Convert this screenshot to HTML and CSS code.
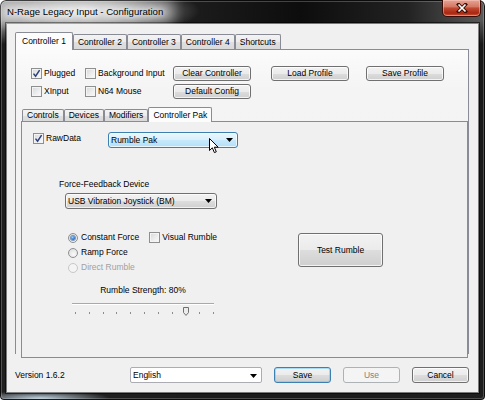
FILE: index.html
```html
<!DOCTYPE html>
<html>
<head>
<meta charset="utf-8">
<title>N-Rage Legacy Input - Configuration</title>
<link rel="stylesheet" href="styles.css">
</head>
<body>
<div class="window">
  <div class="titlebar">
    <div class="title">N-Rage Legacy Input - Configuration</div>
    <div class="close-btn">
      <svg width="12" height="10" viewBox="0 0 12 10"><path d="M2.5 1.5l7 7M9.5 1.5l-7 7" stroke="#3a0d05" stroke-width="3.4" stroke-linecap="square"/><path d="M2.5 1.5l7 7M9.5 1.5l-7 7" stroke="#ffffff" stroke-width="1.7"/></svg>
    </div>
  </div>
  <div class="client">
    <div class="tabstrip outer-tabs">
      <div class="tab selected">Controller 1</div>
      <div class="tab">Controller 2</div>
      <div class="tab">Controller 3</div>
      <div class="tab">Controller 4</div>
      <div class="tab">Shortcuts</div>
    </div>
    <div class="page outer-page">
      <div class="controller-grid">
        <label class="check"><span class="box"><svg width="9" height="9" viewBox="0 0 9 9"><path d="M1.5 4.6L3.6 7.2 7.6 1.2" fill="none" stroke="#2c3f7c" stroke-width="1.5"/></svg></span>Plugged</label>
        <label class="check"><span class="box"></span>Background Input</label>
        <button class="btn">Clear Controller</button>
        <button class="btn">Load Profile</button>
        <button class="btn">Save Profile</button>
        <label class="check"><span class="box"></span>XInput</label>
        <label class="check"><span class="box"></span>N64 Mouse</label>
        <button class="btn">Default Config</button>
      </div>
      <div class="tabstrip inner-tabs">
        <div class="tab">Controls</div>
        <div class="tab">Devices</div>
        <div class="tab">Modifiers</div>
        <div class="tab selected">Controller Pak</div>
      </div>
      <div class="page inner-page">
        <div class="pak-row">
          <label class="check rawdata"><span class="box"><svg width="9" height="9" viewBox="0 0 9 9"><path d="M1.5 4.6L3.6 7.2 7.6 1.2" fill="none" stroke="#2c3f7c" stroke-width="1.5"/></svg></span>RawData</label>
          <div class="combo hover pak-combo">
            <span>Rumble Pak</span>
            <svg class="arrow" width="7" height="4" viewBox="0 0 7 4"><path d="M0 0h7L3.5 4z" fill="#000"/></svg>
            <svg class="cursor" width="11" height="16" viewBox="0 0 11 16"><path d="M0.5 0.5V12.5L3.3 9.8 5.4 14.6 7.3 13.8 5.3 9.2H9.2Z" fill="#fff" stroke="#000" stroke-width="1" stroke-linejoin="round"/></svg>
          </div>
        </div>
        <div class="ffb-label">Force-Feedback Device</div>
        <div class="combo usb-combo">
          <span>USB Vibration Joystick (BM)</span>
          <svg class="arrow" width="7" height="4" viewBox="0 0 7 4"><path d="M0 0h7L3.5 4z" fill="#000"/></svg>
        </div>
        <div class="options">
          <div class="opt-col">
            <div class="opt-row">
              <label class="radio-label first"><span class="radio checked"></span>Constant Force</label>
              <label class="check"><span class="box"></span>Visual Rumble</label>
            </div>
            <div class="opt-row">
              <label class="radio-label"><span class="radio"></span>Ramp Force</label>
            </div>
            <div class="opt-row">
              <label class="radio-label disabled"><span class="radio"></span>Direct Rumble</label>
            </div>
            <div class="strength">Rumble Strength: 80%</div>
            <div class="slider">
              <div class="track"></div>
              <svg class="thumb" width="6" height="9" viewBox="0 0 6 9"><path d="M0.5 0.5H5.5V5.6L3 8.4 0.5 5.6Z" fill="#ececec" stroke="#6f6f6f"/></svg>
              <div class="ticks">
                <span></span><span></span><span></span><span></span><span></span><span></span><span></span><span></span><span></span><span></span><span></span>
              </div>
            </div>
          </div>
          <button class="btn test-btn">Test Rumble</button>
        </div>
      </div>
    </div>
    <div class="footer">
      <div class="version">Version 1.6.2</div>
      <div class="combo lang-combo">
        <span>English</span>
        <svg class="arrow" width="7" height="4" viewBox="0 0 7 4"><path d="M0 0h7L3.5 4z" fill="#000"/></svg>
      </div>
      <button class="btn foot-btn default">Save</button>
      <button class="btn foot-btn" disabled>Use</button>
      <button class="btn foot-btn">Cancel</button>
    </div>
  </div>
</div>
</body>
</html>
```

FILE: styles.css
```css
* { box-sizing: border-box; }
html, body { margin: 0; padding: 0; background: #ffffff; overflow: hidden; }
body {
  font-family: "Liberation Sans", Arial, sans-serif;
  font-size: 8.5px;
  line-height: 13px;
  color: #000;
}

.window {
  width: 485px;
  height: 400px;
  border-radius: 6px 6px 4px 4px;
  overflow: hidden;
  display: flex;
  flex-direction: column;
  background:
    radial-gradient(ellipse 120px 26px at 80px 11px, rgba(225,225,225,0.95), rgba(170,170,170,0.55) 60%, rgba(120,120,120,0) 100%),
    radial-gradient(ellipse 70px 7px at 40px 398px, rgba(200,220,235,0.9), rgba(200,220,235,0) 100%),
    linear-gradient(to bottom, rgba(0,0,0,0) 0, rgba(0,0,0,0) 20px, rgba(22,22,22,0.96) 44px, rgba(28,28,28,0.96) 100%),
    linear-gradient(to right, #9c9c9c 0, #777 22%, #1d1d1d 38%, #0d0d0d 62%, #222 84%, #5b5b5b 100%);
  box-shadow: inset 0 0 0 1px rgba(0,0,0,0.85), inset 0 0 0 2px rgba(255,255,255,0.22);
}

.titlebar {
  height: 24px;
  flex: none;
  display: flex;
  justify-content: space-between;
  align-items: flex-start;
  padding: 0 4px 0 7px;
}
.title {
  position: relative;
  z-index: 0;
  margin-top: 5px;
  font-size: 9.6px;
  line-height: 14px;
  color: #000;
  text-shadow: 0 0 5px #fff, 0 0 9px #fff, 0 0 12px rgba(255,255,255,0.9);
}
.title::before {
  content: "";
  position: absolute;
  left: -8px; right: -10px; top: -2px; bottom: -2px;
  background: rgba(255,255,255,0.45);
  filter: blur(6px);
  z-index: -1;
}
.close-btn {
  width: 39px;
  height: 17px;
  border: 1px solid #3b0c05;
  border-top: none;
  border-radius: 0 0 5px 5px;
  background: linear-gradient(#e5a596 0%, #d67864 42%, #c24b34 50%, #a8260f 82%, #cf5538 100%);
  box-shadow: inset 0 0 0 1px rgba(255,210,200,0.45);
  display: flex;
  align-items: center;
  justify-content: center;
}

.client {
  margin: 0 7px;
  height: 368px;
  flex: none;
  background: #f0f0f0;
  padding: 8px 9px 0 8px;
  display: flex;
  flex-direction: column;
  box-shadow: 0 0 0 1px rgba(255,255,255,0.45), 0 0 0 2px rgba(0,0,0,0.55);
}

/* tabs */
.tabstrip {
  display: flex;
  align-items: flex-end;
  position: relative;
  z-index: 1;
  flex: none;
}
.tab {
  border: 1px solid #898c95;
  border-bottom: none;
  border-radius: 2px 2px 0 0;
  background: linear-gradient(#f3f3f3 0%, #ececec 50%, #e0e0e0 51%, #d9d9d9 100%);
  padding: 0 4px;
  white-space: nowrap;
}
.tab.selected {
  background: #fcfcfc;
  margin-bottom: -1px;
}
.outer-tabs { height: 17px; }
.outer-tabs .tab { height: 15px; line-height: 14px; }
.outer-tabs .tab.selected { height: 18px; line-height: 16px; padding: 0 6px; }

.inner-tabs { height: 14px; margin: 8px 0 0 6px; }
.inner-tabs .tab { height: 12px; line-height: 11px; }
.inner-tabs .tab.selected { height: 15px; line-height: 14px; }

.page {
  border: 1px solid #898c95;
}
.outer-page {
  border-bottom: none;
  background: linear-gradient(#fbfbfb, #f4f4f4 40px, #f1f1f1 100%);
  display: flex;
  flex-direction: column;
  flex: none;
}
.inner-page {
  margin-left: 5px;
  margin-bottom: -4px;
  height: 237px;
  background: #f0f0f0;
  display: flex;
  flex-direction: column;
}

/* controller top grid */
.controller-grid {
  display: grid;
  grid-template-columns: 54px 88px 98px 95px 78px;
  grid-template-rows: 15px 15px;
  row-gap: 3px;
  margin: 16px 0 0 15px;
}

/* checkbox */
.check {
  display: flex;
  align-items: center;
  gap: 2px;
  white-space: nowrap;
}
.box {
  width: 11px;
  height: 11px;
  flex: none;
  border: 1px solid #8e8f8f;
  background: linear-gradient(135deg, #d4d7db 0%, #eeeeee 60%, #fbfbfb 100%);
  box-shadow: inset 0 0 0 1px #f4f4f4;
  display: flex;
  align-items: center;
  justify-content: center;
}

/* buttons */
.btn {
  font: inherit;
  color: #000;
  width: 78px;
  height: 15px;
  padding: 0;
  line-height: 13px;
  border: 1px solid #707070;
  border-radius: 3px;
  background: linear-gradient(#f2f2f2 0%, #ebebeb 50%, #dddddd 51%, #cfcfcf 100%);
  box-shadow: inset 0 0 0 1px rgba(255,255,255,0.75);
  text-align: center;
  white-space: nowrap;
}
.btn:disabled {
  border-color: #adb2b5;
  background: #f4f4f4;
  color: #838383;
  box-shadow: none;
}
.btn.default {
  border-color: #3c7fb1;
  box-shadow: inset 0 0 0 1px rgba(110,200,245,0.55);
}

/* combo */
.combo {
  position: relative;
  height: 16px;
  border: 1px solid #707070;
  border-radius: 3px;
  background: linear-gradient(#f2f2f2 0%, #ebebeb 50%, #dddddd 51%, #cfcfcf 100%);
  box-shadow: inset 0 0 0 1px rgba(255,255,255,0.7);
  display: flex;
  align-items: center;
  justify-content: space-between;
  padding: 0 4px 0 2px;
  white-space: nowrap;
  flex: none;
}
.combo.hover {
  border-color: #3c7fb1;
  background: linear-gradient(#eaf6fd 0%, #d9f0fc 50%, #c6e9fc 51%, #b3dff7 100%);
}
.cursor {
  position: absolute;
  left: 100px;
  top: 5px;
}

/* controller pak page */
.pak-row {
  display: flex;
  align-items: flex-start;
  margin-top: 10px;
  padding-left: 11px;
}
.rawdata { width: 75px; height: 13px; }
.pak-combo { width: 130px; }

.ffb-label {
  margin-top: 30px;
  padding-left: 37px;
}
.usb-combo {
  margin: 2px 0 0 43px;
  width: 152px;
}

.options {
  display: flex;
  align-items: flex-start;
  margin-top: 21px;
  padding-left: 45px;
}
.opt-col { width: 150px; flex: none; }
.opt-row {
  display: flex;
  align-items: center;
  height: 15px;
}
.radio-label {
  display: flex;
  align-items: center;
  gap: 3px;
  padding-left: 1px;
  white-space: nowrap;
}
.radio-label.first { width: 85px; }
.radio {
  width: 10px;
  height: 10px;
  flex: none;
  border-radius: 50%;
  border: 1px solid #8e8f8f;
  background: radial-gradient(circle at 60% 65%, #fafafa 0%, #e6e6e6 60%, #cfd2d6 100%);
  display: flex;
  align-items: center;
  justify-content: center;
}
.radio.checked::after {
  content: "";
  width: 4px;
  height: 4px;
  border-radius: 50%;
  background: radial-gradient(circle at 40% 35%, #9fd3ff 0%, #2a77cf 55%, #0e3f8c 100%);
  box-shadow: 0 0 0 1px rgba(30,80,150,0.55);
}
.radio-label.disabled { color: #a0a0a0; }
.radio-label.disabled .radio {
  border-color: #c7c7c7;
  background: #f4f4f4;
}

.strength {
  margin: 9px 0 0 3px;
  width: 146px;
  text-align: center;
}
.slider {
  position: relative;
  margin-left: 3px;
  width: 146px;
  height: 20px;
}
.track {
  margin: 6px 0 0 2px;
  width: 142px;
  height: 2px;
  border-top: 1px solid #a9a9a9;
  border-bottom: 1px solid #ffffff;
}
.thumb {
  position: absolute;
  left: 113px;
  top: 4px;
}
.ticks {
  display: flex;
  justify-content: space-between;
  margin-top: 7px;
  padding: 0 2px 0 5px;
}
.ticks span {
  width: 1px;
  height: 2px;
  background: #8c8c8c;
}
.test-btn {
  margin: 3px 0 0 81px;
  width: 85px;
  height: 34px;
  flex: none;
}

/* footer */
.footer {
  display: flex;
  align-items: center;
  margin-top: 13px;
  height: 16px;
  flex: none;
}
.version { width: 115px; flex: none; }
.lang-combo {
  width: 132px;
  background: #ffffff;
  border-color: #abadb3;
  border-radius: 2px;
  box-shadow: none;
  align-items: flex-start;
  padding-top: 1px;
}
.lang-combo .arrow { margin-top: 5px; }
.foot-btn {
  width: 57px;
  height: 16px;
  margin-left: 12px;
  flex: none;
}
```
